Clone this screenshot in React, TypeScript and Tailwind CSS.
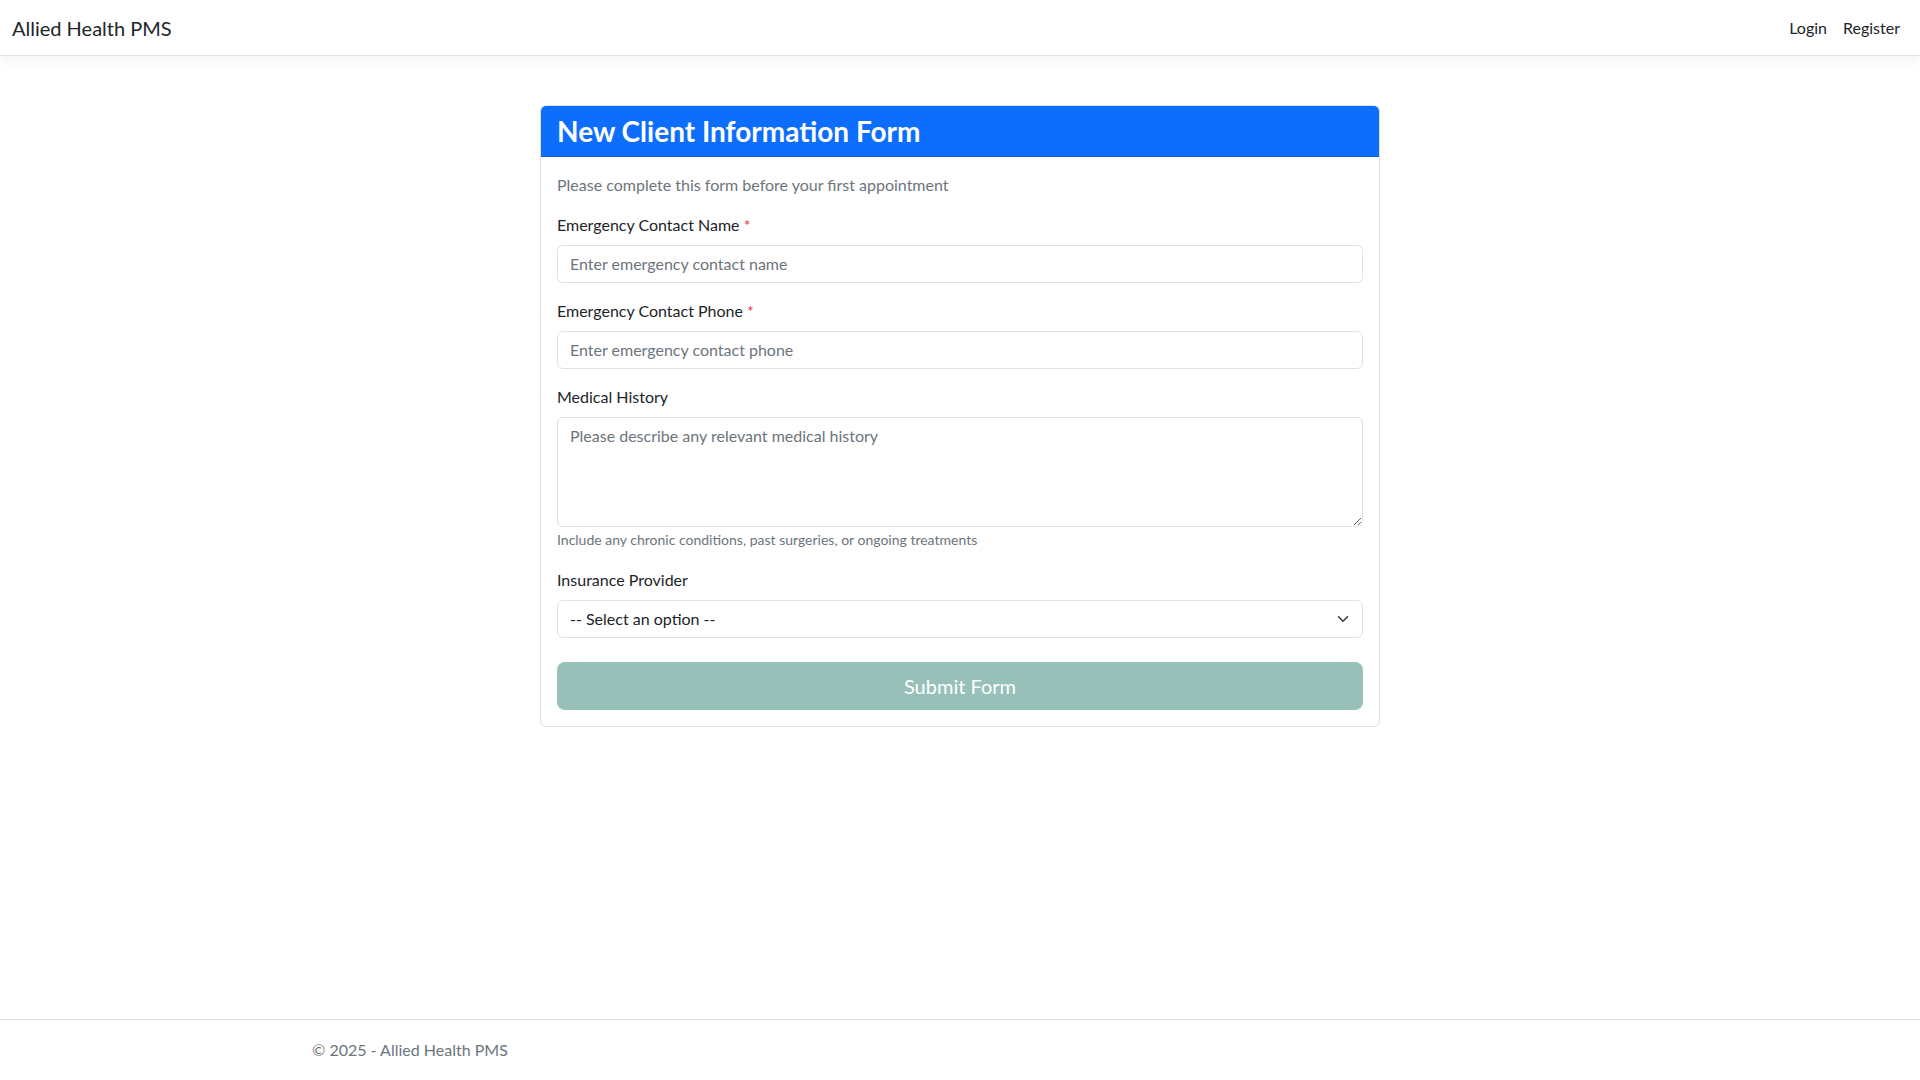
import React from "react";

const FONT = { fontFamily: '"Segoe UI", Lato, "Liberation Sans", sans-serif' };

function Label({ children, required }: { children: React.ReactNode; required?: boolean }) {
  return (
    <label className="block mb-2 text-base leading-6 text-[#212529]">
      {children}
      {required && <span className="text-[#dc3545]"> *</span>}
    </label>
  );
}

export default function App() {
  return (
    <div className="min-h-screen flex flex-col bg-white text-[#212529]" style={FONT}>
      <header className="h-[56px] border-b border-[#dee2e6] bg-white shadow-[0_4px_12px_rgba(0,0,0,0.05)] flex items-center justify-between px-3">
        <a className="text-xl leading-[30px] text-[#212529] py-[5px]">Allied Health PMS</a>
        <nav className="flex items-center">
          <a className="px-2 py-2 text-base leading-6 text-[#212529]">Login</a>
          <a className="px-2 py-2 text-base leading-6 text-[#212529]">Register</a>
        </nav>
      </header>

      <main className="flex-1">
        <div className="w-[840px] mx-auto mt-[49px] border border-[#dee2e6] rounded-md bg-white">
          <div className="bg-[#0d6efd] rounded-t-[5px] px-4 pt-[9px] pb-[7px] border-b border-[#0b5ed7]">
            <h3 className="text-[28px] leading-[1.2] font-bold text-white">New Client Information Form</h3>
          </div>
          <div className="p-4">
            <p className="text-base leading-6 text-[#6c757d] mb-4">Please complete this form before your first appointment</p>

            <div className="mb-4">
              <Label required>Emergency Contact Name</Label>
              <input
                className="w-full h-[38px] px-3 border border-[#dee2e6] rounded-md text-base text-[#212529] placeholder:text-[#6c757d] outline-none"
                placeholder="Enter emergency contact name"
                style={FONT}
              />
            </div>

            <div className="mb-4">
              <Label required>Emergency Contact Phone</Label>
              <input
                className="w-full h-[38px] px-3 border border-[#dee2e6] rounded-md text-base text-[#212529] placeholder:text-[#6c757d] outline-none"
                placeholder="Enter emergency contact phone"
                style={FONT}
              />
            </div>

            <div className="mb-[18px]">
              <Label>Medical History</Label>
              <textarea
                className="block w-full h-[110px] px-3 py-1.5 border border-[#dee2e6] rounded-md text-base leading-6 text-[#212529] placeholder:text-[#6c757d] outline-none resize-y"
                placeholder="Please describe any relevant medical history"
                style={FONT}
              />
              <div className="mt-[2px] text-sm leading-[21px] text-[#6c757d]">
                Include any chronic conditions, past surgeries, or ongoing treatments
              </div>
            </div>

            <div className="mb-6">
              <Label>Insurance Provider</Label>
              <div className="relative">
                <select
                  className="w-full h-[38px] pl-3 pr-10 border border-[#dee2e6] rounded-md text-base text-[#212529] bg-white appearance-none outline-none"
                  style={FONT}
                  defaultValue=""
                >
                  <option value="">-- Select an option --</option>
                </select>
                <svg
                  className="absolute right-[14px] top-1/2 -translate-y-1/2 pointer-events-none"
                  width="12"
                  height="12"
                  viewBox="0 0 16 16"
                  fill="none"
                >
                  <path d="m2 5 6 6 6-6" stroke="#343a40" strokeWidth="2" strokeLinecap="round" strokeLinejoin="round" />
                </svg>
              </div>
            </div>

            <button
              className="w-full h-[48px] rounded-lg bg-[#97c1b8] text-white text-xl leading-[30px]"
              style={FONT}
            >
              Submit Form
            </button>
          </div>
        </div>
      </main>

      <footer className="border-t border-[#dee2e6] h-[61px]">
        <div className="w-[1320px] mx-auto px-3 leading-[60px] text-base text-[#6c757d] whitespace-nowrap">
          © 2025 - Allied Health PMS
        </div>
      </footer>
    </div>
  );
}
